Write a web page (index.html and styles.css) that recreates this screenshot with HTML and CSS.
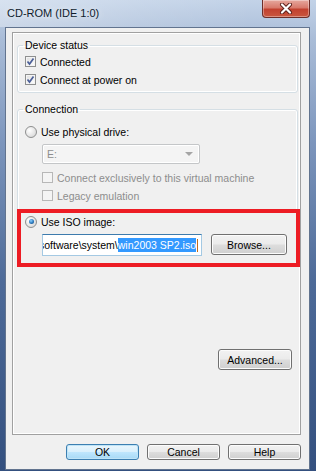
FILE: index.html
```html
<!DOCTYPE html>
<html lang="en">
<head>
    <meta charset="UTF-8">
    <meta name="viewport" content="width=device-width, initial-scale=1.0">
    <title>CD-ROM (IDE 1:0)</title>
    <link rel="stylesheet" href="styles.css">
</head>
<body>
    <div class="window">
        <!-- Title bar -->
        <div class="titlebar">
            <span class="title">CD-ROM (IDE 1:0)</span>
            <div class="close">
                <svg width="16" height="11" viewBox="0 0 16 11">
                    <path d="M4 1.5 L12 9.5 M12 1.5 L4 9.5" stroke="#5a1f1a" stroke-width="4" stroke-linecap="round"/>
                    <path d="M4 1.5 L12 9.5 M12 1.5 L4 9.5" stroke="#ffffff" stroke-width="2.2" stroke-linecap="round"/>
                </svg>
            </div>
        </div>

        <div class="client">
            <div class="page">
                <fieldset class="group group-status">
                    <legend>Device status</legend>
                    <div class="opt">
                        <span class="check">
                            <svg width="9" height="9" viewBox="0 0 9 9"><path d="M1.5 4.5 L3.5 7 L7.5 1.5" fill="none" stroke="#4b5f98" stroke-width="1.7"/></svg>
                        </span>
                        Connected
                    </div>
                    <div class="opt">
                        <span class="check">
                            <svg width="9" height="9" viewBox="0 0 9 9"><path d="M1.5 4.5 L3.5 7 L7.5 1.5" fill="none" stroke="#4b5f98" stroke-width="1.7"/></svg>
                        </span>
                        Connect at power on
                    </div>
                </fieldset>

                <fieldset class="group group-conn">
                    <legend>Connection</legend>
                    <div class="opt opt-first"><span class="radio"></span>Use physical drive:</div>
                    <div class="indent">
                        <div class="combo">E:<span class="arrow"></span></div>
                        <div class="opt disabled"><span class="check"></span>Connect exclusively to this virtual machine</div>
                        <div class="opt disabled"><span class="check"></span>Legacy emulation</div>
                    </div>

                    <div class="highlight">
                        <div class="opt"><span class="radio selected"></span>Use ISO image:</div>
                        <div class="iso-row">
                            <div class="field">
                                <span class="path">D:\software\system\</span><span class="sel">win2003 SP2.iso</span><span class="caret"></span>
                            </div>
                            <div class="btn btn-browse">Browse...</div>
                        </div>
                    </div>
                </fieldset>

                <div class="advanced-row">
                    <div class="btn btn-advanced">Advanced...</div>
                </div>
            </div>

            <div class="footer">
                <div class="btn btn-footer btn-default">OK</div>
                <div class="btn btn-footer">Cancel</div>
                <div class="btn btn-footer">Help</div>
            </div>
        </div>
    </div>
</body>
</html>
```

FILE: styles.css
```css
body {
    margin: 0;
    font-family: "Liberation Sans", Arial, sans-serif;
    font-size: 10.5px;
    color: #000;
}
.window {
    width: 316px;
    height: 471px;
    box-sizing: border-box;
    padding: 0 6px 1px 5px;
    display: flex;
    flex-direction: column;
    background: linear-gradient(180deg, #c3d3e8 0%, #aabdd8 8%, #7d96bd 30%, #4d6a98 60%, #34507f 100%);
}
.titlebar {
    height: 27px;
    display: flex;
    justify-content: space-between;
    align-items: flex-start;
    margin: 0 -6px 0 -5px;
    padding: 0 6px 0 7px;
    background: linear-gradient(90deg, rgba(255,255,255,0.35) 0%, rgba(255,255,255,0.12) 45%, rgba(255,255,255,0) 80%);
}
.title {
    font-size: 11px;
    line-height: 13px;
    padding-top: 7px;
    color: #0f1c2c;
    text-shadow: 0 0 6px rgba(255,255,255,0.9);
}
.close {
    width: 46px;
    height: 17px;
    border: 1px solid #6d2e29;
    border-top: none;
    border-radius: 0 0 4px 4px;
    display: flex;
    align-items: center;
    justify-content: center;
    background: linear-gradient(180deg, #e6a89e 0%, #d87a6c 45%, #c2412f 55%, #c9573f 100%);
    box-shadow: inset 0 0 0 1px rgba(255,255,255,0.35);
}
.client {
    flex: 1;
    border: 1px solid #62748f;
    background: #f0f0f0;
    padding: 4px 8px 9px 6px;
    display: flex;
    flex-direction: column;
}
.page {
    height: 403px;
    box-sizing: border-box;
    border: 1px solid #a0a0a0;
    box-shadow: inset 0 0 0 1px #ffffff;
    padding: 6px 2px 0 4px;
    display: flex;
    flex-direction: column;
}
.group {
    margin: 0;
    padding: 0 7px;
    border: 1px solid #d5dfe5;
    border-radius: 3px;
    box-shadow: inset 0 0 0 1px #ffffff;
    display: flex;
    flex-direction: column;
}
.group legend {
    padding: 0 2px;
    margin-left: -2px;
    line-height: 12px;
}
.group-status {
    padding-top: 2px;
    padding-bottom: 4px;
    gap: 1px;
}
.group-conn {
    margin-top: 10px;
    padding-bottom: 0;
}
.opt {
    height: 17px;
    display: flex;
    align-items: center;
    white-space: nowrap;
}
.opt-first {
    margin-top: 8px;
}
.check {
    width: 9px;
    height: 9px;
    border: 1px solid #8e8f8f;
    margin-right: 4px;
    display: flex;
    align-items: center;
    justify-content: center;
    background: linear-gradient(135deg, #dcdcdc 0%, #f6f6f6 70%, #ffffff 100%);
    box-shadow: inset 0 0 0 1px #f4f4f4;
}
.disabled {
    color: #8d8d8d;
}
.disabled .check {
    border-color: #b7b7b7;
    background: #f4f4f4;
    box-shadow: none;
}
.radio {
    width: 10px;
    height: 10px;
    border: 1px solid #8e8f8f;
    border-radius: 50%;
    margin-right: 4px;
    display: flex;
    align-items: center;
    justify-content: center;
    background: radial-gradient(circle at 35% 35%, #ffffff 0%, #e8e8e8 50%, #cfcfcf 100%);
}
.radio.selected::after {
    content: "";
    width: 5px;
    height: 5px;
    border-radius: 50%;
    background: radial-gradient(circle at 40% 35%, #8fd1ff 0%, #2f7fc4 50%, #103f70 100%);
}
.indent {
    margin-left: 17px;
    display: flex;
    flex-direction: column;
    gap: 1px;
}
.combo {
    width: 152px;
    height: 18px;
    margin: 4px 0 4px;
    border: 1px solid #c4c6c8;
    border-radius: 2px;
    box-shadow: inset 0 0 0 1px #ffffff;
    background: #f4f4f4;
    color: #8d8d8d;
    padding-left: 4px;
    display: flex;
    align-items: center;
    justify-content: space-between;
}
.arrow {
    width: 0;
    height: 0;
    margin-right: 6px;
    border-left: 4px solid transparent;
    border-right: 4px solid transparent;
    border-top: 4px solid #a5a5a5;
}
.highlight {
    margin: 5px -10px -3px -8px;
    border: 4px solid #ed1c24;
    padding: 0 8px 7px 4px;
}
.iso-row {
    margin-top: 4px;
    padding-left: 17px;
    display: flex;
    align-items: flex-start;
    gap: 9px;
}
.field {
    width: 155px;
    height: 20px;
    border: 1px solid #a4c9e3;
    border-top-color: #3d7bad;
    background: #ffffff;
    padding-right: 3px;
    overflow: hidden;
    white-space: nowrap;
    display: flex;
    align-items: center;
    justify-content: flex-end;
}
.path, .sel {
    flex-shrink: 0;
}
.sel {
    background: #3399ff;
    color: #ffffff;
    line-height: 14px;
}
.caret {
    flex-shrink: 0;
    width: 1px;
    height: 13px;
    margin-left: 1px;
    background: #c46a1a;
}
.btn {
    box-sizing: border-box;
    border: 1px solid #707070;
    border-radius: 3px;
    background: linear-gradient(180deg, #f2f2f2 0%, #ebebeb 48%, #dddddd 52%, #cfcfcf 100%);
    box-shadow: inset 0 0 0 1px #fcfcfc;
    display: flex;
    align-items: center;
    justify-content: center;
    white-space: nowrap;
}
.btn-browse {
    width: 76px;
    height: 21px;
}
.advanced-row {
    margin-top: 84px;
    padding-right: 6px;
    display: flex;
    justify-content: flex-end;
}
.btn-advanced {
    width: 74px;
    height: 21px;
}
.footer {
    margin-top: 9px;
    display: flex;
    justify-content: flex-end;
    gap: 8px;
}
.btn-footer {
    width: 73px;
    height: 16px;
}
.btn-default {
    border-color: #3c7fb1;
    background: linear-gradient(180deg, #eaf6fd 0%, #d9f0fc 48%, #bee6fd 52%, #a7d9f5 100%);
    box-shadow: inset 0 0 0 1px #bfe4f7;
}
```
